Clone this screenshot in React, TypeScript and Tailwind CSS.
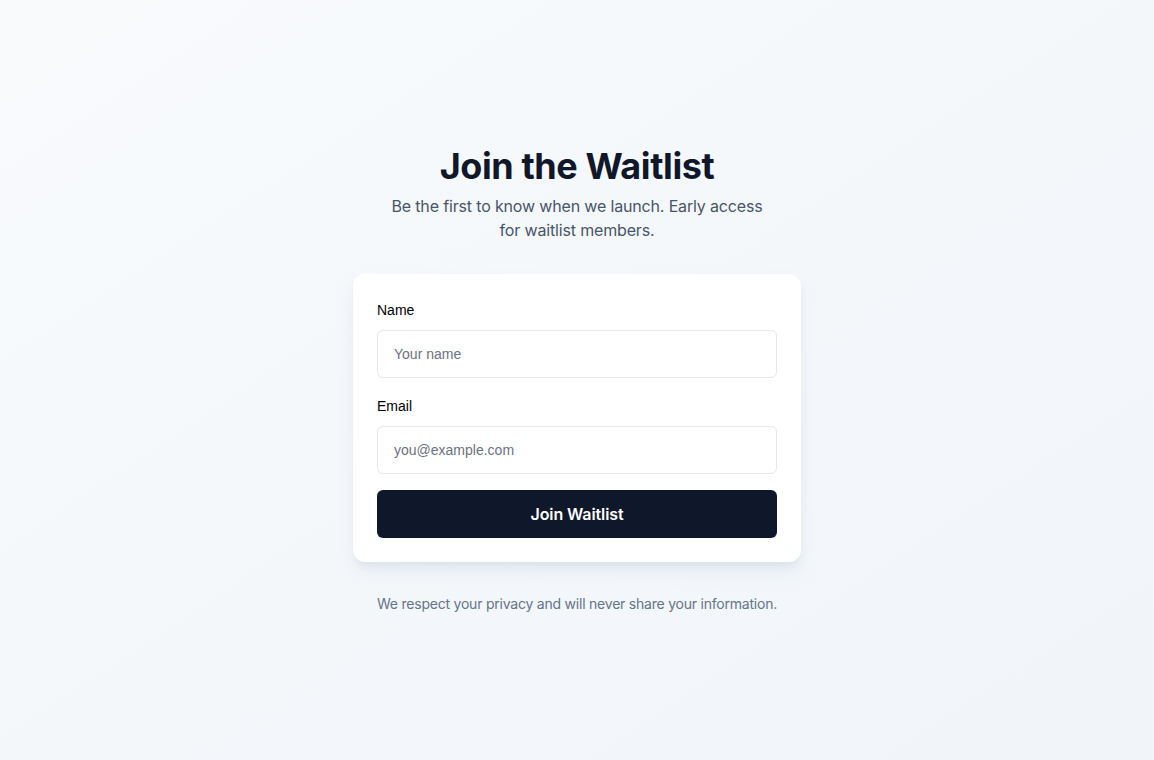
export default function App() {
  return (
    <div
      className="min-h-screen w-full flex flex-col items-center justify-center bg-gradient-to-br from-[#f8fafc] to-[#f1f5f9] px-4"
      style={{ fontFamily: "Inter, 'Liberation Sans', sans-serif" }}
    >
      <div className="w-full max-w-md flex flex-col items-center">
        <h1 className="text-[36px] leading-[40px] font-bold tracking-[-0.4px] text-[#0f172a] text-center">
          Join the Waitlist
        </h1>
        <p className="mt-2 max-w-sm text-center text-base leading-6 tracking-[-0.16px] text-[#475569]">
          Be the first to know when we launch. Early access for waitlist members.
        </p>
        <form
          className="mt-8 w-full rounded-xl bg-white p-6 shadow-lg shadow-slate-300/50"
          onSubmit={(e) => e.preventDefault()}
        >
          <label
            className="block text-sm leading-6 font-medium text-black mb-2"
            style={{ fontFamily: "'Liberation Sans', Arial, sans-serif" }}
          >
            Name
          </label>
          <input
            type="text"
            placeholder="Your name"
            className="block w-full h-12 rounded-md border border-[#e5e7eb] px-4 text-sm text-[#0f172a] placeholder:text-[#6b7280] outline-none"
            style={{ fontFamily: "'Liberation Sans', Arial, sans-serif" }}
          />
          <label
            className="block mt-4 text-sm leading-6 font-medium text-black mb-2"
            style={{ fontFamily: "'Liberation Sans', Arial, sans-serif" }}
          >
            Email
          </label>
          <input
            type="email"
            placeholder="you@example.com"
            className="block w-full h-12 rounded-md border border-[#e5e7eb] px-4 text-sm text-[#0f172a] placeholder:text-[#6b7280] outline-none"
            style={{ fontFamily: "'Liberation Sans', Arial, sans-serif" }}
          />
          <button
            type="submit"
            className="mt-4 w-full h-12 rounded-md bg-[#0f172a] text-white text-base leading-6 font-semibold tracking-[-0.1px]"
          >
            Join Waitlist
          </button>
        </form>
        <p className="mt-8 text-sm leading-5 tracking-[-0.22px] text-[#64748b] text-center">
          We respect your privacy and will never share your information.
        </p>
      </div>
    </div>
  );
}
